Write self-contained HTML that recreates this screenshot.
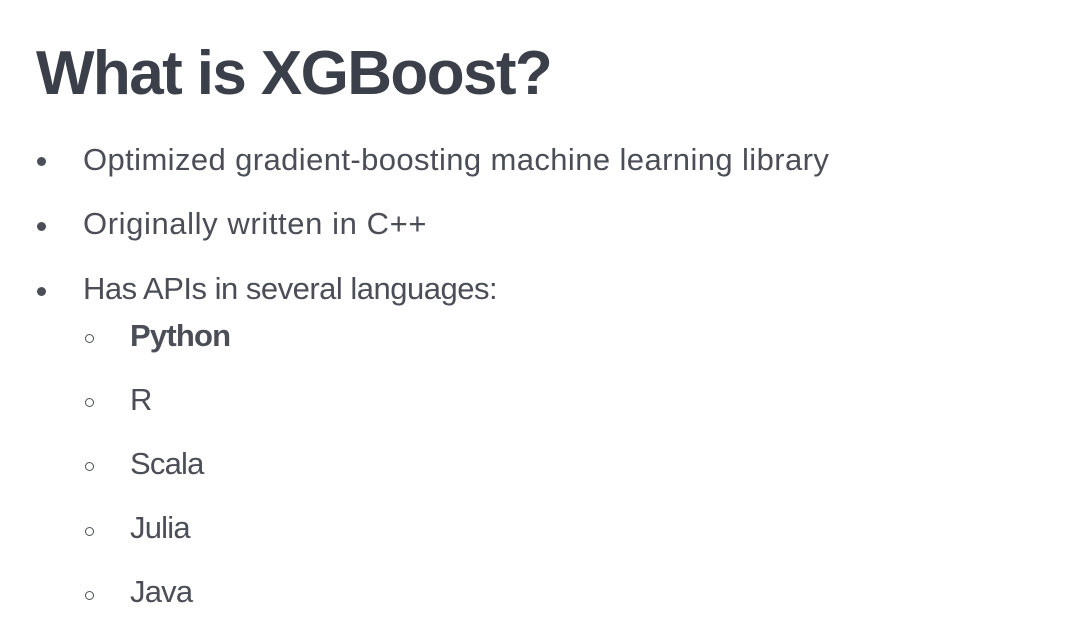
<!DOCTYPE html>
<html><head><style>
html,body{margin:0;padding:0;background:#fff;width:1092px;height:642px;overflow:hidden;font-family:"Liberation Sans",sans-serif;}
h1{position:absolute;left:36px;top:38px;margin:0;font-size:62px;font-weight:bold;color:#3b3f4a;letter-spacing:-1.6px;line-height:72px;}
.t{position:absolute;font-size:31px;color:#4b4e57;line-height:34px;white-space:nowrap;letter-spacing:0.4px;}
.s{letter-spacing:-0.8px;}
.b{position:absolute;width:9px;height:9px;border-radius:50%;background:#4b4e57;}
.c{position:absolute;width:7px;height:7px;border-radius:50%;border:1.8px solid #4b4e57;}
</style></head><body>
<h1>What is XGBoost?</h1>
<div class="b" style="left:37px;top:157px"></div><div class="t" style="left:83px;top:143px">Optimized gradient-boosting machine learning library</div>
<div class="b" style="left:37px;top:222px"></div><div class="t" style="left:83px;top:207px;letter-spacing:0.6px">Originally written in C++</div>
<div class="b" style="left:37px;top:287px"></div><div class="t" style="left:83px;top:272px;letter-spacing:-0.5px">Has APIs in several languages:</div>
<div class="c" style="left:85px;top:334px"></div><div class="t s" style="left:130px;top:319px;font-weight:bold">Python</div>
<div class="c" style="left:85px;top:398px"></div><div class="t s" style="left:130px;top:383px">R</div>
<div class="c" style="left:85px;top:462px"></div><div class="t s" style="left:130px;top:447px">Scala</div>
<div class="c" style="left:85px;top:527px"></div><div class="t s" style="left:130px;top:511px">Julia</div>
<div class="c" style="left:85px;top:591px"></div><div class="t s" style="left:130px;top:575px">Java</div>
</body></html>
